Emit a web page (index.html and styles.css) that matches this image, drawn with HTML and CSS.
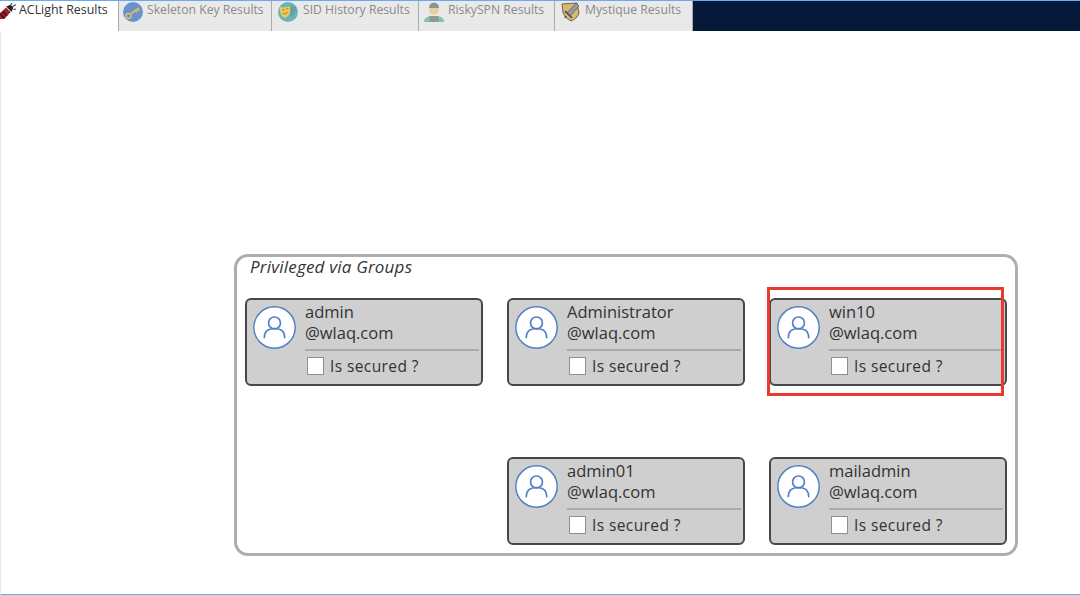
FILE: index.html
```html
<!DOCTYPE html>
<html lang="en">
<head>
<meta charset="utf-8">
<title>ACLight Results</title>
<link rel="stylesheet" href="styles.css">
</head>
<body>
<div class="window">
  <nav class="tabs">
    <div class="tab tab-active tab-a">
      <svg class="ico ico-torch" viewBox="0 0 18 18"><path d="M-3 14 L7 5 L12 10 L3 20 L-3 20 Z" fill="#a51c28"/><path d="M0 12l5 5M3 9.500l5 5" stroke="#2a0a0c" stroke-width="1.300"/><path d="M7 4l6 6 2-5-3-3z" fill="#2b2325"/><path d="M12 2l2-3M14 4l4-2M15 7l3 0" stroke="#3a3335" stroke-width="1.200"/></svg>
      <span>ACLight Results</span>
    </div>
    <div class="tab tab-b">
      <svg class="ico" viewBox="0 0 20 20"><circle cx="10" cy="10" r="10" fill="#6a92cc"/><circle cx="5.500" cy="14" r="2.500" fill="none" stroke="#d9bf6a" stroke-width="1.500"/><path d="M7.500 12L16 6M12.500 8.500l1.500 2M15 6.800l1.500 2" stroke="#d9bf6a" stroke-width="1.600"/></svg>
      <span>Skeleton Key Results</span>
    </div>
    <div class="tab tab-c">
      <svg class="ico" viewBox="0 0 20 20"><circle cx="10" cy="10" r="10" fill="#6cb4b4"/><path d="M11 3l7 2c0 5-2 9-5 10z" fill="#5fa3a6"/><path d="M2 5c3 1 7 0 10-1 1 6-1 11-5 12-3-1-6-6-5-11z" fill="#eec95a"/><path d="M4.500 8l2-.5M8.500 7l2-.5M5 11c1.500 1.500 3.500 1 4.500-1" stroke="#9a7a2c" stroke-width="1" fill="none"/></svg>
      <span>SID History Results</span>
    </div>
    <div class="tab tab-d">
      <svg class="ico" viewBox="0 0 20 20"><path d="M0 20c0-5 4-6 10-6s10 1 10 6z" fill="#7fc4b4"/><rect x="5.500" y="14" width="9" height="6" fill="#8c9a96"/><circle cx="10" cy="8" r="5" fill="#eccf9e"/><path d="M5 6c0-7 10-7 10 0z" fill="#8a9490"/></svg>
      <span>RiskySPN Results</span>
    </div>
    <div class="tab tab-e">
      <svg class="ico" viewBox="0 0 20 20"><path d="M1 2l15-1 2 10c-1 4-5 7-8 8-4-2-7-5-8-9z" fill="#d6b977" stroke="#6d6450" stroke-width="1"/><path d="M15 1L6 11l3 3 9-10z" fill="#9a9a9a" stroke="#555" stroke-width=".7"/><path d="M4 9l7 7M5 14l-1 2" stroke="#4a4a46" stroke-width="1.600"/></svg>
      <span>Mystique Results</span>
    </div>
    <div class="tabs-fill"></div>
  </nav>

  <main class="content">
    <section class="group">
      <h2 class="group-title">Privileged via Groups</h2>
      <div class="cards">
        <article class="card">
          <svg class="avatar" viewBox="0 0 42 42"><circle cx="21" cy="21" r="20.200" fill="#fff" stroke="#4f7fc6" stroke-width="1.400"/><circle cx="21" cy="16.500" r="5.800" fill="none" stroke="#4f7fc6" stroke-width="1.600"/><path d="M11 31c0-6 4-9 10-9s10 3 10 9" fill="none" stroke="#4f7fc6" stroke-width="1.600" stroke-linecap="round"/></svg>
          <div class="card-main">
            <div class="name">admin</div>
            <div class="domain">@wlaq.com</div>
            <div class="secured"><span class="check"></span><span class="secured-label">Is secured ?</span></div>
          </div>
        </article>
        <article class="card">
          <svg class="avatar" viewBox="0 0 42 42"><circle cx="21" cy="21" r="20.200" fill="#fff" stroke="#4f7fc6" stroke-width="1.400"/><circle cx="21" cy="16.500" r="5.800" fill="none" stroke="#4f7fc6" stroke-width="1.600"/><path d="M11 31c0-6 4-9 10-9s10 3 10 9" fill="none" stroke="#4f7fc6" stroke-width="1.600" stroke-linecap="round"/></svg>
          <div class="card-main">
            <div class="name">Administrator</div>
            <div class="domain">@wlaq.com</div>
            <div class="secured"><span class="check"></span><span class="secured-label">Is secured ?</span></div>
          </div>
        </article>
        <article class="card">
          <svg class="avatar" viewBox="0 0 42 42"><circle cx="21" cy="21" r="20.200" fill="#fff" stroke="#4f7fc6" stroke-width="1.400"/><circle cx="21" cy="16.500" r="5.800" fill="none" stroke="#4f7fc6" stroke-width="1.600"/><path d="M11 31c0-6 4-9 10-9s10 3 10 9" fill="none" stroke="#4f7fc6" stroke-width="1.600" stroke-linecap="round"/></svg>
          <div class="card-main">
            <div class="name">win10</div>
            <div class="domain">@wlaq.com</div>
            <div class="secured"><span class="check"></span><span class="secured-label">Is secured ?</span></div>
          </div>
          <div class="highlight"></div>
        </article>
        <article class="card card-skip">
          <svg class="avatar" viewBox="0 0 42 42"><circle cx="21" cy="21" r="20.200" fill="#fff" stroke="#4f7fc6" stroke-width="1.400"/><circle cx="21" cy="16.500" r="5.800" fill="none" stroke="#4f7fc6" stroke-width="1.600"/><path d="M11 31c0-6 4-9 10-9s10 3 10 9" fill="none" stroke="#4f7fc6" stroke-width="1.600" stroke-linecap="round"/></svg>
          <div class="card-main">
            <div class="name">admin01</div>
            <div class="domain">@wlaq.com</div>
            <div class="secured"><span class="check"></span><span class="secured-label">Is secured ?</span></div>
          </div>
        </article>
        <article class="card">
          <svg class="avatar" viewBox="0 0 42 42"><circle cx="21" cy="21" r="20.200" fill="#fff" stroke="#4f7fc6" stroke-width="1.400"/><circle cx="21" cy="16.500" r="5.800" fill="none" stroke="#4f7fc6" stroke-width="1.600"/><path d="M11 31c0-6 4-9 10-9s10 3 10 9" fill="none" stroke="#4f7fc6" stroke-width="1.600" stroke-linecap="round"/></svg>
          <div class="card-main">
            <div class="name">mailadmin</div>
            <div class="domain">@wlaq.com</div>
            <div class="secured"><span class="check"></span><span class="secured-label">Is secured ?</span></div>
          </div>
        </article>
      </div>
    </section>
  </main>
</div>
</body>
</html>
```
FILE: styles.css
```css
* { box-sizing: border-box; }
html, body { margin: 0; height: 100%; overflow: hidden; background: #fff; }
body { font-family: "Open Sans", "Noto Sans", sans-serif; color: #333; }

.window {
  width: 1080px;
  height: 595px;
  display: flex;
  flex-direction: column;
  border-left: 1px solid #dcebfd;
  border-bottom: 1px solid #6aaaf2;
}

.tabs {
  flex: none;
  height: 31px;
  display: flex;
  margin-left: -1px;
  border-top: 1px solid #6aa9ee;
}
.tab {
  flex: none;
  display: flex;
  align-items: flex-start;
  gap: 4px;
  background: #e9e9e9;
  border-right: 1px solid #a9a9a9;
  color: #8a8a8a;
  font-size: 12.200px;
  line-height: 18px;
  white-space: nowrap;
  padding: 0 0 0 4px;
}
.tab-a { width: 119px; background: #fff; color: #333; padding-left: 0; gap: 3px; overflow: hidden; font-size: 12.400px; }
.tab-b { width: 153px; }
.tab-c { width: 147px; padding-left: 6px; gap: 5px; }
.tab-d { width: 136px; padding-left: 5px; }
.tab-e { width: 138px; padding-left: 6px; }
.tabs-fill { flex: 1; background: #07193a; }

.ico { flex: none; width: 20px; height: 20px; margin-top: 1px; }
.ico-torch { width: 16px; height: 16px; margin-top: 2px; }

.content { flex: 1; padding: 223px 62px 38px 233px; }

.group {
  height: 302px;
  border: 3px solid #aeaeae;
  border-radius: 14px;
  padding: 0 8px;
}
.group-title {
  margin: -1px 0 0 5px;
  height: 42px;
  font-size: 17px;
  line-height: 21px;
  font-style: italic;
  font-weight: 400;
  letter-spacing: .2px;
  color: #333;
}

.cards {
  display: grid;
  grid-template-columns: repeat(3, 238px);
  grid-auto-rows: 88px;
  column-gap: 24px;
  row-gap: 71px;
}
.card {
  position: relative;
  display: flex;
  background: #cfcfcf;
  border: 2px solid #484848;
  border-radius: 6px;
  padding: 6px 2px 0 6px;
}
.card-skip { grid-column-start: 2; }

.avatar { flex: none; width: 43px; height: 43px; margin-right: 9px; }

.card-main { flex: 1; min-width: 0; }
.name, .domain { font-size: 16.500px; line-height: 21px; color: #333; }
.name { margin-top: -5px; }
.domain { height: 29px; border-bottom: 2px solid #a9a9a9; }

.secured { display: flex; align-items: center; gap: 6px; margin-top: 6px; padding-left: 2px; }
.check { flex: none; width: 17px; height: 18px; background: #fff; border: 1px solid #8f8f8f; }
.secured-label { font-size: 15.500px; line-height: 18px; letter-spacing: .4px; color: #333; }

.highlight {
  position: absolute;
  left: -4px;
  top: -13px;
  width: 237px;
  height: 109px;
  border: 3px solid #ea3a2d;
}
```
